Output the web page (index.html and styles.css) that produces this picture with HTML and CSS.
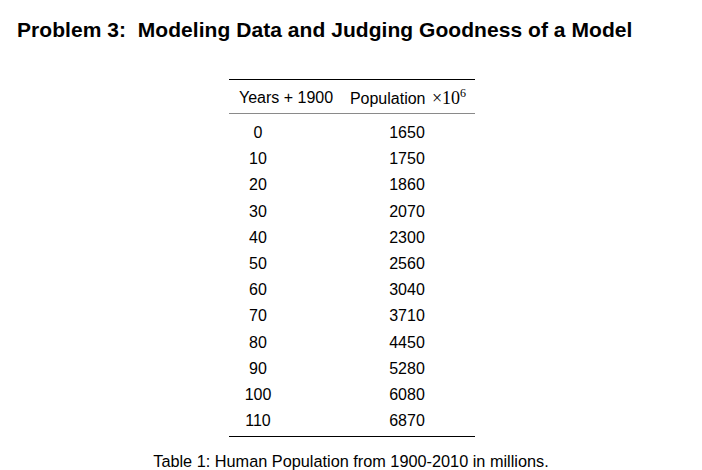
FILE: index.html
```html
<!DOCTYPE html>
<html>
<head>
<meta charset="utf-8">
<link rel="stylesheet" href="styles.css">
</head>
<body>
<h1 class="title">Problem 3:&nbsp; Modeling Data and Judging Goodness of a Model</h1>
<div class="figure">
  <table class="data">
    <colgroup><col class="col1"><col class="col2"></colgroup>
    <thead>
      <tr><th class="c1">Years + 1900</th><th class="c2">Population <span class="math">×10<sup>6</sup></span></th></tr>
    </thead>
    <tbody>
      <tr><td class="c1">0</td><td class="c2">1650</td></tr>
      <tr><td class="c1">10</td><td class="c2">1750</td></tr>
      <tr><td class="c1">20</td><td class="c2">1860</td></tr>
      <tr><td class="c1">30</td><td class="c2">2070</td></tr>
      <tr><td class="c1">40</td><td class="c2">2300</td></tr>
      <tr><td class="c1">50</td><td class="c2">2560</td></tr>
      <tr><td class="c1">60</td><td class="c2">3040</td></tr>
      <tr><td class="c1">70</td><td class="c2">3710</td></tr>
      <tr><td class="c1">80</td><td class="c2">4450</td></tr>
      <tr><td class="c1">90</td><td class="c2">5280</td></tr>
      <tr><td class="c1">100</td><td class="c2">6080</td></tr>
      <tr><td class="c1">110</td><td class="c2">6870</td></tr>
    </tbody>
  </table>
  <p class="caption">Table 1: Human Population from 1900-2010 in millions.</p>
</div>
</body>
</html>
```
FILE: styles.css
```css
html, body {
  margin: 0;
  padding: 0;
  background: #fff;
}
body {
  font-family: "Liberation Sans", Arial, sans-serif;
  color: #000;
  width: 702px;
}
.title {
  margin: 0;
  padding: 17px 0 0 17px;
  font-size: 21px;
  font-weight: bold;
  line-height: 25px;
  letter-spacing: 0.05px;
}
.figure {
  display: flex;
  flex-direction: column;
  align-items: center;
  margin-top: 37px;
}
.data {
  border-collapse: collapse;
  table-layout: fixed;
  width: 246px;
  font-size: 16px;
  margin-left: 2px;
  border-top: 1.5px solid #000;
  border-bottom: 1.5px solid #000;
}
.col1 {
  width: 112px;
}
.col2 {
  width: 134px;
}
.data th {
  font-weight: normal;
  height: 30px;
  padding: 3px 0 0 0;
  border-bottom: 1px solid #8a8a8a;
  white-space: nowrap;
  text-align: center;
}
.data th.c1 {
  padding-left: 2px;
}
.data th.c2 {
  padding-left: 0;
}
.data td {
  padding: 0;
  height: 26.2px;
  line-height: 26.2px;
  text-align: center;
}
.data tbody tr:first-child td {
  padding-top: 6px;
}
.data tbody tr:last-child td {
  padding-bottom: 2px;
}
.data td.c1 {
  padding-right: 54px;
}
.data td.c2 {
  padding-right: 2px;
}
.math {
  font-family: "Liberation Serif", "Times New Roman", serif;
  font-size: 18px;
  margin-left: 2px;
}
.math sup {
  font-size: 12px;
  line-height: 0;
  vertical-align: 7px;
}
.caption {
  margin: 15px 0 0 0;
  font-size: 16.3px;
  line-height: 18px;
}
```
